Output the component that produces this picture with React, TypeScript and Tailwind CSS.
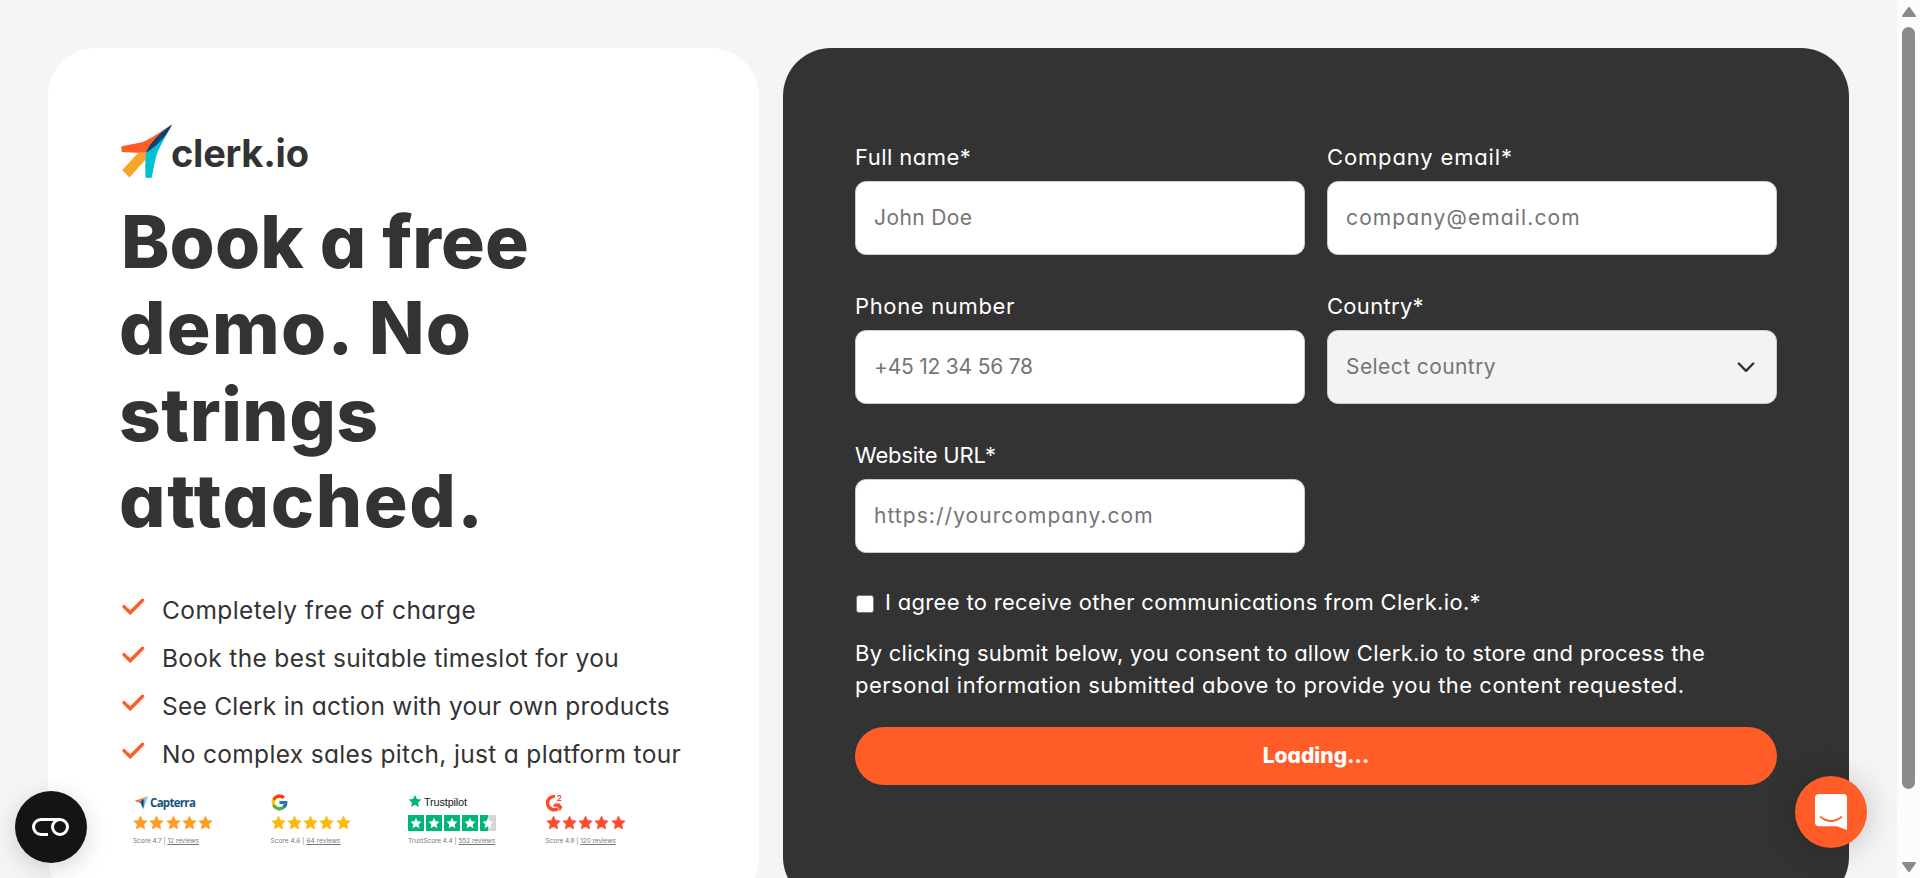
import type { ReactNode } from "react";
import { FcGoogle } from "react-icons/fc";

const STAR = "M12 1.2l3.3 6.9 7.5 1-5.5 5.2 1.4 7.5L12 18.1l-6.7 3.7 1.4-7.5L1.2 9.1l7.5-1z";

function ClerkMark() {
  return (
    <svg viewBox="0 0 52 54" className="h-[54px] w-[52px]">
      <path d="M17 29 L26 29 L26 34 L8.500 53.400 L1.200 46 Z" fill="#f7a528" />
      <path d="M51 0.500 C42 6 33 13 24 17 C18 19.600 8 20.500 0.200 22.500 L0.800 28 C8 28.600 17 29 25 28.800 Z" fill="#ff5c28" />
      <path d="M51.200 0.500 C46 9 41 19 37 27 C34.500 33 32.500 45 30.800 53.600 Q27 54.800 24.500 53.200 C24.200 45 24.200 36 25 28.500 Z" fill="#00c1d4" />
      <path d="M51.200 0.400 C42 6 29 18 25 28.400 C33 24.500 46 12 51.200 0.400 Z" fill="#0d4173" />
    </svg>
  );
}

function Perk({ children, tracking }: { children: ReactNode; tracking: string }) {
  return (
    <li className="flex h-12 items-center">
      <svg viewBox="0 0 24 18" className="-mt-1.5 mr-[17px] h-[18px] w-6" fill="none" stroke="#ff5c28" strokeWidth="3.400">
        <path d="M3 8.600 L9.200 14.800 L21.600 2.200" strokeLinecap="round" />
      </svg>
      <span className={`text-[24.5px] leading-[48px] whitespace-nowrap ${tracking}`}>{children}</span>
    </li>
  );
}

function Stars({ color }: { color: string }) {
  return (
    <div className="flex gap-[1.300px]">
      {[0, 1, 2, 3, 4].map((i) => (
        <svg key={i} viewBox="0 0 24 23" className="h-[15px] w-[15px]" fill={color} stroke={color} strokeLinejoin="round">
          <path d={STAR} />
        </svg>
      ))}
    </div>
  );
}

function TrustStars() {
  return (
    <div className="flex gap-[1.900px]">
      {[0, 1, 2, 3, 4].map((i) => (
        <svg key={i} viewBox="0 0 32 32" className="h-4 w-4">
          <rect width="32" height="32" fill={i === 4 ? "#d5d5d8" : "#00b67a"} />
          {i === 4 && <rect width="16" height="32" fill="#00b67a" />}
          <path d={STAR} fill="#fff" transform="translate(4 4.500)" />
        </svg>
      ))}
    </div>
  );
}

function Review({ logo, stars, score, count, tracking }: { logo: ReactNode; stars: ReactNode; score: string; count: string; tracking: string }) {
  return (
    <div className="flex w-[137.500px] flex-col">
      <div className="flex h-[18px] items-center">{logo}</div>
      <div className="flex h-[22px] items-center">{stars}</div>
      <div className={`mt-px text-[6.500px] leading-[12px] whitespace-nowrap text-[#777] ${tracking}`}>
        {score} | <span className="underline">{count}</span>
      </div>
    </div>
  );
}

function Field({ label, placeholder, labelTracking, tracking, select }: { label: string; placeholder: string; labelTracking: string; tracking: string; select?: boolean }) {
  return (
    <div>
      <div className={`h-10 text-[22px] leading-8 text-white ${labelTracking}`}>{label}</div>
      <div className={`flex h-[74px] items-center justify-between rounded-[11px] border border-[#ccc] px-[18px] text-[21px] text-[#757575] ${select ? "bg-[#f3f3f3]" : "bg-white"}`}>
        <span className={tracking}>{placeholder}</span>
        {select && (
          <svg viewBox="0 0 18 11" className="mr-[3px] h-[11px] w-[18px]" fill="none" stroke="#333" strokeWidth="2.400" strokeLinecap="round" strokeLinejoin="round">
            <path d="M1.800 1.500 L9 8.800 L16.200 1.500" />
          </svg>
        )}
      </div>
    </div>
  );
}

export default function App() {
  return (
    <div className="flex h-[878px] w-[1920px] overflow-hidden bg-[#f5f5f5] font-['Inter',sans-serif] text-[#333] [font-feature-settings:'cv11']">
      <main className="flex h-[980px] w-[1897px] gap-6 px-12 pt-12">
        <section className="h-[857px] w-[711px] rounded-[48px] bg-white pt-[76px] pl-[73px]">
          <div className="flex h-[54px]">
            <ClerkMark />
            <span className="-ml-[2px] text-[38px] leading-[58px] font-bold tracking-[-0.250px]">clerk.io</span>
          </div>
          <h1 className="mt-[21px] text-[73px] leading-[86.400px] font-extrabold whitespace-nowrap">
            <span className="block tracking-[0.100px]">Book a free</span>
            <span className="-ml-0.5 block tracking-[1.300px]">demo. No</span>
            <span className="-ml-0.5 block tracking-[0.500px]">strings</span>
            <span className="-ml-0.5 block tracking-[1.600px]">attached.</span>
          </h1>
          <ul className="mt-[41px]">
            <Perk tracking="tracking-[0.420px]">Completely free of charge</Perk>
            <Perk tracking="tracking-[0.320px]">Book the best suitable timeslot for you</Perk>
            <Perk tracking="tracking-[0.240px]">See Clerk in action with your own products</Perk>
            <Perk tracking="tracking-[0.320px]">No complex sales pitch, just a platform tour</Perk>
          </ul>
          <div className="mt-4 ml-3 flex">
            <Review
              logo={
                <>
                  <svg viewBox="0 0 14 14" className="mr-0.5 ml-0.5 h-[13px] w-[13px] shrink-0">
                    <path d="M0 5 L14 0 L9 4 Z" fill="#ff9d28" />
                    <path d="M14 0 L9 14 L8 5 Z" fill="#68c5ed" />
                    <path d="M0 5 L9.500 3.500 L9 14 L6 7.500 Z" fill="#044d80" />
                    <path d="M0 5 L8 3.500 L6 7 Z" fill="#ff7a3c" />
                  </svg>
                  <span className="font-['Open_Sans'] text-[11.500px] leading-none font-bold tracking-[-0.700px] text-[#15537f]">Capterra</span>
                </>
              }
              stars={<Stars color="#ff9d28" />}
              score="Score 4.7"
              count="12 reviews"
              tracking="tracking-[-0.050px]"
            />
            <Review logo={<FcGoogle className="-ml-px h-[19px] w-[19px] shrink-0" />} stars={<Stars color="#fbb90b" />} score="Score 4.6" count="64 reviews" tracking="tracking-[0.050px]" />
            <Review
              logo={
                <>
                  <svg viewBox="0 0 24 23" className="-mt-1 mr-0.5 h-[14px] w-[14px] shrink-0" fill="#00b67a">
                    <path d={STAR} />
                  </svg>
                  <span className="font-['Liberation_Sans'] text-[11px] leading-none tracking-[-0.200px] text-[#191919]">Trustpilot</span>
                </>
              }
              stars={<TrustStars />}
              score="TrustScore 4.4"
              count="552 reviews"
              tracking="tracking-[-0.050px]"
            />
            <Review
              logo={
                <svg viewBox="0 0 17 18" className="h-[18px] w-[17px]">
                  <path d="M9 2.400 A6.700 6.700 0 1 0 12 14.600" fill="none" stroke="#ff492c" strokeWidth="3.400" />
                  <path d="M8.400 9.600 L13.600 9.600 L16.400 13.200 L13.900 17 L11.600 12.800 L7 12.800 Z" fill="#ff492c" />
                  <text x="10.800" y="7.200" fontSize="8" fontWeight="700" fill="#ff492c">2</text>
                </svg>
              }
              stars={<Stars color="#ff492c" />}
              score="Score 4.8"
              count="120 reviews"
              tracking="tracking-[-0.050px]"
            />
          </div>
        </section>
        <section className="h-[857px] w-[1066px] rounded-[48px] bg-[#333] px-[72px] pt-[93px]">
          <div className="grid grid-cols-2 gap-x-[22px] gap-y-[35px]">
            <Field label="Full name*" placeholder="John Doe" labelTracking="tracking-[0.450px]" tracking="tracking-[0.400px]" />
            <Field label="Company email*" placeholder="company@email.com" labelTracking="tracking-[0.850px]" tracking="tracking-[1.130px]" />
            <Field label="Phone number" placeholder="+45 12 34 56 78" labelTracking="tracking-[0.650px]" tracking="tracking-[-0.220px]" />
            <Field label="Country*" placeholder="Select country" labelTracking="tracking-[0.300px]" tracking="tracking-[0.420px]" select />
            <Field label="Website URL*" placeholder="https://yourcompany.com" labelTracking="tracking-[-0.180px]" tracking="tracking-[1.050px]" />
          </div>
          <div className="mt-[33px] flex h-8 items-center text-[22px] leading-8 text-white">
            <span className="mt-[3px] mr-[11px] ml-px h-[18px] w-[18px] rounded-[3px] border border-[#767676] bg-white" />
            <span className="tracking-[0.320px] whitespace-nowrap">I agree to receive other communications from Clerk.io.*</span>
          </div>
          <p className="mt-[19px] text-[22px] leading-8 whitespace-nowrap text-white">
            <span className="block tracking-[0.260px]">By clicking submit below, you consent to allow Clerk.io to store and process the</span>
            <span className="block tracking-[0.500px]">personal information submitted above to provide you the content requested.</span>
          </p>
          <button className="mt-[26px] flex h-[58px] w-full items-center justify-center rounded-full bg-[#ff5c28] text-[21px] font-extrabold text-white">Loading...</button>
        </section>
      </main>
      <div className="flex w-[23px] flex-col items-center bg-[#fcfcfc]">
        <svg viewBox="0 0 16 12" className="mt-1.5 h-3 w-4" fill="#8b8b8b" stroke="#8b8b8b" strokeLinejoin="round" strokeWidth="2">
          <path d="M8 1.800 L14 10 L2 10 Z" />
        </svg>
        <div className="mt-[9px] h-[762px] w-[13px] rounded-full bg-[#8b8b8b]" />
        <svg viewBox="0 0 16 12" className="mt-[72px] h-3 w-4" fill="#8b8b8b" stroke="#8b8b8b" strokeLinejoin="round" strokeWidth="2">
          <path d="M8 10.200 L14 2 L2 2 Z" />
        </svg>
      </div>
      <button className="absolute top-[791px] left-[15px] flex h-[72px] w-[72px] items-center justify-center rounded-full bg-[#141414] shadow-[0_6px_24px_rgba(0,0,0,0.16)]">
        <svg viewBox="0 0 38 18" className="h-[18px] w-[38px]" fill="none" stroke="#fff" strokeWidth="3">
          <path d="M16 16.500 H9 A7.500 7.500 0 0 1 9 1.500 H28" />
          <circle cx="28" cy="9" r="7.500" />
        </svg>
      </button>
      <button className="absolute top-[776px] left-[1795px] flex h-[72px] w-[72px] items-center justify-center rounded-full bg-[#ff5c28] shadow-[0_2px_32px_rgba(0,0,0,0.22)]">
        <svg viewBox="0 0 32 36" className="h-9 w-8">
          <path d="M4 0 H28 Q32 0 32 4 V36 L22 32.300 H4 Q0 32.300 0 28.300 V4 Q0 0 4 0 Z" fill="#fff" />
          <path d="M5.600 23 Q16 31 26.400 23" fill="none" stroke="#ff5c28" strokeWidth="1.800" strokeLinecap="round" />
        </svg>
      </button>
    </div>
  );
}
